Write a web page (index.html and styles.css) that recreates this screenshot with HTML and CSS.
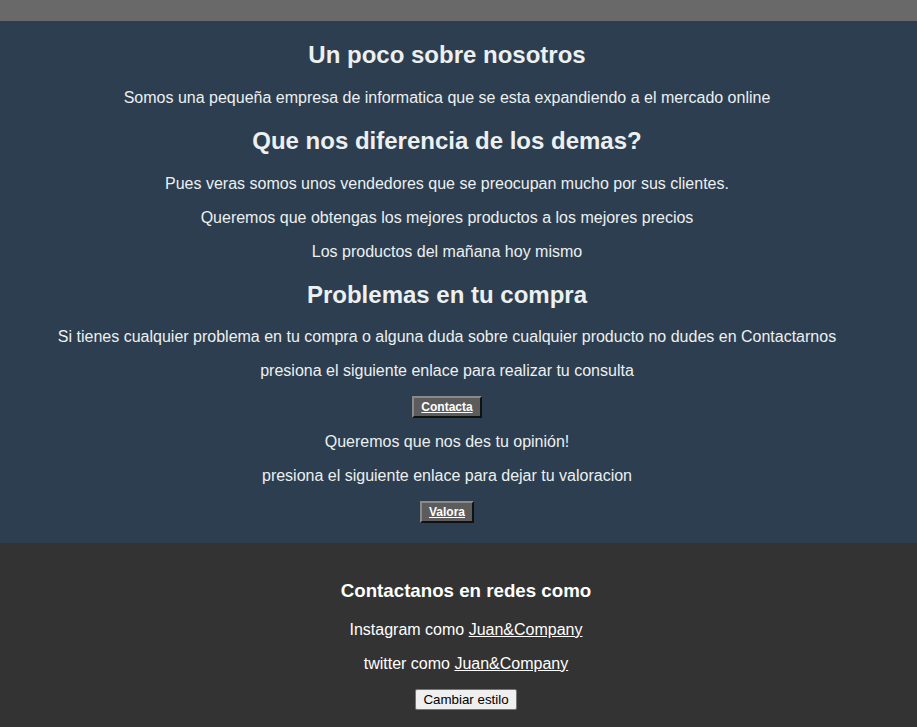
FILE: index.html
```html
<!DOCTYPE html>
<html lang="es">
<head>
<meta charset="utf-8">
<title>Sobre nosotros</title>
<link rel="stylesheet" href="styles.css">
</head>
<body>
<header class="topbar"></header>
<main class="about">
  <h2 class="title">Un poco sobre nosotros</h2>
  <p class="text">Somos una pequeña empresa de informatica que se esta expandiendo a el mercado online</p>
  <h2 class="title">Que nos diferencia de los demas?</h2>
  <p class="text">Pues veras somos unos vendedores que se preocupan mucho por sus clientes.</p>
  <p class="text">Queremos que obtengas los mejores productos a los mejores precios</p>
  <p class="text">Los productos del mañana hoy mismo</p>
  <h2 class="title">Problemas en tu compra</h2>
  <p class="text">Si tienes cualquier problema en tu compra o alguna duda sobre cualquier producto no dudes en Contactarnos</p>
  <p class="text">presiona el siguiente enlace para realizar tu consulta</p>
  <p class="action"><a class="btn" href="#">Contacta</a></p>
  <p class="text">Queremos que nos des tu opinión!</p>
  <p class="text">presiona el siguiente enlace para dejar tu valoracion</p>
  <p class="action"><a class="btn" href="#">Valora</a></p>
</main>
<footer class="footer">
  <h3 class="footer-title">Contactanos en redes como</h3>
  <p class="footer-text">Instagram como <a class="link" href="#">Juan&amp;Company</a></p>
  <p class="footer-text">twitter como <a class="link" href="#">Juan&amp;Company</a></p>
  <p class="footer-action"><button class="style-btn" type="button">Cambiar estilo</button></p>
</footer>
</body>
</html>
```

FILE: styles.css
```css
html, body {
  margin: 0;
  padding: 0;
}
body {
  font-family: "Liberation Sans", Arial, sans-serif;
  font-size: 16px;
  background: #333333;
  min-height: 727px;
}
.topbar {
  height: 21px;
  background: #696969;
}
.about {
  display: flow-root;
  background: #2c3e50;
  color: #ecf0f1;
  text-align: center;
  padding: 0 23px 5px 0;
}
.title {
  font-size: 24px;
  font-weight: bold;
  margin: 19.92px 0;
}
.text {
  margin: 16px 0;
  line-height: 18px;
}
.action {
  margin: 16px 0;
  height: 21px;
  line-height: 21px;
}
.btn {
  display: inline-block;
  vertical-align: top;
  font-size: 12px;
  font-weight: bold;
  line-height: 14px;
  color: #ffffff;
  text-decoration: underline;
  background: #5c5c5c;
  padding: 2px 7px;
  border: 2px solid;
  border-color: #8a8a8a #111111 #111111 #8a8a8a;
}
.footer {
  display: flow-root;
  background: #333333;
  color: #ffffff;
  text-align: center;
  padding: 18px 0 0 15px;
}
.footer-title {
  font-size: 18.72px;
  font-weight: bold;
  margin: 18.72px 0;
}
.footer-text {
  margin: 16px 0;
  line-height: 18px;
}
.link {
  color: #ffffff;
  text-decoration: underline;
}
.footer-action {
  margin: 16px 0;
}
.style-btn {
  font-family: "Liberation Sans", Arial, sans-serif;
  font-size: 13.333px;
  color: #000000;
  background: #efefef;
  border: 1px solid #767676;
  border-radius: 2px;
  padding: 2px 7px;
}
```
